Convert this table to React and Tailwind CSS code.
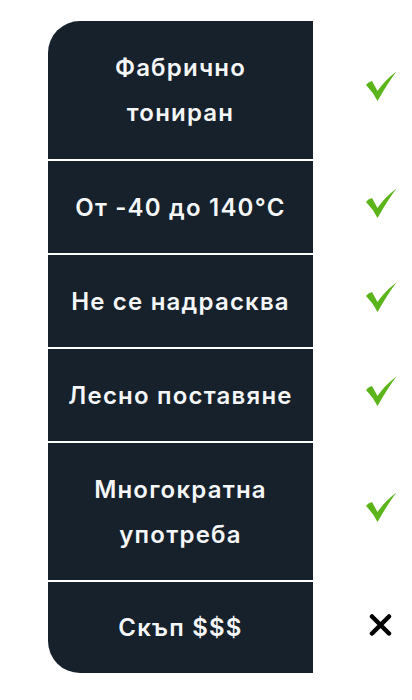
const rows = [
  { lines: ['Фабрично', 'тониран'], ok: true, h: 'h-[138px]' },
  { lines: ['От -40 до 140°C'], ok: true, h: 'h-[92px]' },
  { lines: ['Не се надрасква'], ok: true, h: 'h-[92px]' },
  { lines: ['Лесно поставяне'], ok: true, h: 'h-[92px]' },
  { lines: ['Многократна', 'употреба'], ok: true, h: 'h-[137px]' },
  { lines: ['Скъп $$$'], ok: false, h: 'h-[91px]' },
]

function Check() {
  return (
    <svg width="32" height="31" viewBox="0 0 32 31" className="block">
      <path
        d="M1 14 Q3 11 7 10 L12.5 20 Q20 9 31.5 0.5 Q24 10 12.5 30 Q8 21 1 14 Z"
        fill="#5bb41a"
      />
    </svg>
  )
}

function Cross() {
  return (
    <svg width="23" height="22" viewBox="0 0 23 22" className="block">
      <path d="M3 2.5 L20 19.5 M20 2.5 L3 19.5" stroke="#000" strokeWidth="4.5" strokeLinecap="round" />
    </svg>
  )
}

export default function App() {
  return (
    <div lang="bg" className="min-h-[700px] w-[412px] bg-white pt-[21px] font-[Inter,sans-serif]">
      <div className="flex flex-col gap-[2px] bg-white">
        {rows.map((row, i) => (
          <div key={i} className={`flex ${row.h}`}>
            <div
              className={`ml-[48px] w-[265px] bg-[#16212b] flex flex-col items-center justify-center text-[24px] font-semibold tracking-[0.05em] leading-[45px] text-[#f4f6f7] ${
                i === 0 ? 'rounded-tl-[32px]' : ''
              } ${i === rows.length - 1 ? 'rounded-bl-[32px]' : ''}`}
            >
              {row.lines.map((l) => (
                <span key={l} className="whitespace-nowrap">{l}</span>
              ))}
            </div>
            <div className="flex-1 flex items-center pl-[52px] pb-[8px]">
              {row.ok ? (
                <Check />
              ) : (
                <div className="pl-[4px] pt-[2px]">
                  <Cross />
                </div>
              )}
            </div>
          </div>
        ))}
      </div>
    </div>
  )
}
